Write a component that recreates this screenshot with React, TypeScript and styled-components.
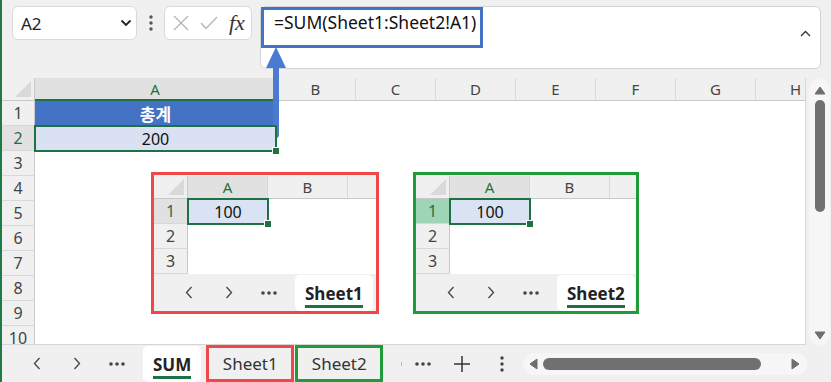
import * as React from 'react';
import styled, { createGlobalStyle } from 'styled-components';

const GREEN = '#1e7145';
const RED_FRAME = '#f04848';
const GREEN_FRAME = '#1f9b37';
const BLUE = '#4472c4';

const GlobalStyle = createGlobalStyle`
  html, body { margin: 0; padding: 0; background: #f0f0f0; }
  body { font-family: "Noto Sans", "Noto Sans CJK KR", sans-serif; color: #222; }
  * { box-sizing: border-box; }
`;

const Window = styled.div`
  position: relative;
  width: 831px;
  height: 382px;
  overflow: hidden;
  display: flex;
  flex-direction: column;
  background: #f0f0f0;
  border-left: 2px solid #1f7a48;
`;

/* ---------- formula toolbar ---------- */

const TopBar = styled.div`
  height: 78px;
  flex: none;
  display: flex;
  align-items: flex-start;
  padding: 6px 10px 0 10px;
`;

const NameBox = styled.div`
  width: 125px;
  height: 34px;
  background: #fff;
  border: 1px solid #d9d9d9;
  border-radius: 6px;
  display: flex;
  align-items: center;
  justify-content: space-between;
  padding: 0 4px 0 8px;
  font-size: 17px;
  color: #222;
`;

const Grip = styled.div`
  width: 27px;
  height: 34px;
  display: flex;
  align-items: center;
  justify-content: center;
`;

const FxBox = styled.div`
  width: 88px;
  height: 34px;
  background: #fff;
  border: 1px solid #d9d9d9;
  border-radius: 6px;
  display: flex;
  align-items: center;
  padding-left: 8px;
  gap: 11px;
`;

const FxLabel = styled.span`
  font-family: "Liberation Serif", "DejaVu Serif", serif;
  font-style: italic;
  font-size: 22px;
  color: #333;
  line-height: 1;
`;

const FormulaBar = styled.div`
  margin-left: 8px;
  width: 561px;
  height: 63px;
  background: #fff;
  border: 1px solid #d4d4d4;
  border-radius: 6px;
  display: flex;
  align-items: flex-start;
`;

const FormulaText = styled.div`
  width: 222px;
  height: 41px;
  border: 3px solid ${BLUE};
  padding-left: 10px;
  display: flex;
  align-items: center;
  font-size: 17.5px;
  color: #111;
  padding-bottom: 11px;
`;

const Collapse = styled.div`
  margin-left: auto;
  padding: 13px 9px 0 0;
`;

/* ---------- sheet grid ---------- */

const Middle = styled.div`
  height: 267px;
  flex: none;
  display: flex;
`;

const Sheet = styled.div`
  width: 804px;
  display: flex;
  flex-direction: column;
  overflow: hidden;
  background: #fff;
  border-right: 1px solid #d6d6d6;
  border-bottom: 1px solid #d6d6d6;
`;

const HeaderRow = styled.div`
  height: 23px;
  flex: none;
  display: flex;
  background: #f0f0f0;
`;

const Corner = styled.div<{ $width: number }>`
  width: ${p => p.$width}px;
  flex: none;
  display: flex;
  align-items: flex-end;
  justify-content: flex-end;
  padding: 0 3px 3px 0;
  border-right: 1px solid #c8c8c8;
  border-bottom: 1px solid #c8c8c8;
`;

const ColHeader = styled.div<{ $width: number; $active?: boolean; $underline?: boolean }>`
  width: ${p => p.$width}px;
  flex: none;
  display: flex;
  align-items: center;
  justify-content: center;
  font-size: 15px;
  color: ${p => (p.$active ? GREEN : '#444')};
  background: ${p => (p.$active ? '#e1e1e1' : 'transparent')};
  border-right: 1px solid #d8d8d8;
  border-bottom: ${p => (p.$underline ? `2px solid ${GREEN}` : '1px solid #c8c8c8')};
`;

const GridRow = styled.div`
  height: 25px;
  flex: none;
  display: flex;
`;

const RowHeader = styled.div<{ $width: number; $active?: boolean; $fill?: string }>`
  width: ${p => p.$width}px;
  flex: none;
  display: flex;
  align-items: center;
  justify-content: center;
  font-size: 16px;
  color: ${p => (p.$active ? GREEN : '#444')};
  background: ${p => p.$fill || (p.$active ? '#e1e1e1' : '#f0f0f0')};
  border-right: 1px solid #c8c8c8;
  border-bottom: 1px solid #d8d8d8;
`;

const Cell = styled.div<{ $width: number; $fill?: string; $selected?: boolean; $bold?: boolean }>`
  position: relative;
  width: ${p => p.$width}px;
  flex: none;
  display: flex;
  align-items: center;
  justify-content: center;
  font-size: 16px;
  font-weight: ${p => (p.$bold ? 700 : 400)};
  color: ${p => (p.$bold ? '#fff' : '#111')};
  background: ${p => p.$fill || '#fff'};
  ${p =>
    p.$selected &&
    `
    z-index: 1;
    outline: 2px solid ${GREEN};
    outline-offset: -1px;
    &::after {
      content: '';
      position: absolute;
      right: -4px;
      bottom: -4px;
      width: 6px;
      height: 6px;
      background: ${GREEN};
      border: 1px solid #fff;
    }
  `}
`;

const KoreanText = styled.span`
  font-family: "Noto Sans CJK KR", "Noto Sans", sans-serif;
  font-size: 17px;
`;

/* ---------- scroll bars ---------- */

const VScroll = styled.div`
  width: 21px;
  margin-left: 3px;
  margin-top: 1px;
  height: 266px;
  border-radius: 10px;
  background: #f6f6f6;
  display: flex;
  flex-direction: column;
  align-items: center;
  padding: 7px 0 5px;
`;

const VThumb = styled.div`
  width: 10px;
  height: 112px;
  margin-top: 5px;
  border-radius: 5px;
  background: #707070;
`;

const HScroll = styled.div`
  width: 284px;
  height: 22px;
  align-self: center;
  border-radius: 11px;
  background: #f6f6f6;
  display: flex;
  align-items: center;
  padding: 0 7px 0 6px;
`;

const HThumb = styled.div`
  width: 218px;
  height: 12px;
  margin-left: 5px;
  border-radius: 6px;
  background: #707070;
`;

const Spacer = styled.div`
  flex: 1;
`;

/* ---------- sheet tabs ---------- */

const TabStrip = styled.div`
  height: 37px;
  flex: none;
  display: flex;
  align-items: stretch;
  padding-left: 15px;
  background: #f0f0f0;
`;

const NavButton = styled.div<{ $width?: number }>`
  width: ${p => p.$width || 40}px;
  flex: none;
  display: flex;
  align-items: center;
  justify-content: center;
`;

const SheetTab = styled.div`
  margin: 1px 0 0 6px;
  padding: 0 10px;
  background: #fff;
  border-radius: 5px;
  display: flex;
  align-items: center;
  justify-content: center;
  font-size: 17px;
  font-weight: 700;
  color: #222;
`;

const TabLabel = styled.span`
  padding-top: 3px;
  border-bottom: 3px solid ${GREEN};
  line-height: 23px;
`;

const MarkedTab = styled.div<{ $color: string; $gap?: number }>`
  width: 88px;
  flex: none;
  margin-left: ${p => p.$gap ?? 1}px;
  border: 3px solid ${p => p.$color};
  display: flex;
  align-items: center;
  justify-content: center;
  font-size: 17px;
  color: #333;
`;

const Tick = styled.div`
  width: 1px;
  height: 4px;
  margin: 0 0 0 18px;
  align-self: center;
  background: #b8b8b8;
`;

/* ---------- floating pictures ---------- */

const MiniFrame = styled.div<{ $color: string; $left: number; $width: number }>`
  position: absolute;
  left: ${p => p.$left}px;
  top: 172px;
  width: ${p => p.$width}px;
  height: 142px;
  border: 3px solid ${p => p.$color};
  background: #f0f0f0;
  padding-top: 1px;
  display: flex;
  flex-direction: column;
  overflow: hidden;
`;

const MiniGrid = styled.div`
  background: #fff;
  display: flex;
  flex-direction: column;
`;

const Arrow = styled.svg`
  position: absolute;
  left: 263px;
  top: 47px;
`;

/* ---------- icons ---------- */

const ChevronLeft = () => (
  <svg width="8" height="13" viewBox="0 0 8 13">
    <path d="M6.5 1 L1.5 6.5 L6.5 12" fill="none" stroke="#444" strokeWidth="1.3" />
  </svg>
);

const ChevronRight = () => (
  <svg width="8" height="13" viewBox="0 0 8 13">
    <path d="M1.5 1 L6.5 6.5 L1.5 12" fill="none" stroke="#444" strokeWidth="1.3" />
  </svg>
);

const Ellipsis = () => (
  <svg width="16" height="4" viewBox="0 0 16 4">
    <circle cx="2" cy="2" r="1.8" fill="#444" />
    <circle cx="8" cy="2" r="1.8" fill="#444" />
    <circle cx="14" cy="2" r="1.8" fill="#444" />
  </svg>
);

const VDots = ({ color = '#444' }: { color?: string }) => (
  <svg width="4" height="16" viewBox="0 0 4 16">
    <circle cx="2" cy="2" r="1.7" fill={color} />
    <circle cx="2" cy="8" r="1.7" fill={color} />
    <circle cx="2" cy="14" r="1.7" fill={color} />
  </svg>
);

const Triangle = ({ dir }: { dir: 'up' | 'down' | 'left' | 'right' }) => {
  const pts = {
    up: '0,8 5,1 10,8',
    down: '0,1 10,1 5,8',
    left: '8,0 8,10 1,5',
    right: '1,0 1,10 8,5',
  }[dir];
  const vertical = dir === 'up' || dir === 'down';
  return (
    <svg width={vertical ? 10 : 9} height={vertical ? 9 : 10} viewBox={vertical ? '0 0 10 9' : '0 0 9 10'}>
      <polygon points={pts} fill="#6e6e6e" strokeLinejoin="round" stroke="#6e6e6e" strokeWidth="1" />
    </svg>
  );
};

const CornerMark = () => (
  <svg width="16" height="16" viewBox="0 0 16 16">
    <polygon points="16,0 16,16 0,16" fill="#d9d9d9" />
  </svg>
);

/* ---------- data ---------- */

const mainCols = [
  { key: 'A', width: 241 },
  { key: 'B', width: 80 },
  { key: 'C', width: 80 },
  { key: 'D', width: 80 },
  { key: 'E', width: 80 },
  { key: 'F', width: 80 },
  { key: 'G', width: 80 },
  { key: 'H', width: 80 },
];

const rows = [1, 2, 3, 4, 5, 6, 7, 8, 9, 10];

type TabsProps = { children: React.ReactNode };

const NavGroup: React.FC<TabsProps> = ({ children }) => (
  <TabStrip>
    <NavButton><ChevronLeft /></NavButton>
    <NavButton><ChevronRight /></NavButton>
    <NavButton><Ellipsis /></NavButton>
    {children}
  </TabStrip>
);

type MiniProps = {
  color: string;
  left: number;
  width: number;
  name: string;
  rowFill?: string;
};

const MiniSheet: React.FC<MiniProps> = ({ color, left, width, name, rowFill }) => (
  <MiniFrame $color={color} $left={left} $width={width}>
    <HeaderRow>
      <Corner $width={34}><CornerMark /></Corner>
      <ColHeader $width={80} $active>A</ColHeader>
      <ColHeader $width={80}>B</ColHeader>
      <ColHeader $width={40} />
    </HeaderRow>
    <MiniGrid>
      {[1, 2, 3].map(r => (
        <GridRow key={r}>
          <RowHeader $width={34} $active={r === 1} $fill={r === 1 ? rowFill : undefined}>{r}</RowHeader>
          {r === 1 ? (
            <Cell $width={80} $fill="#dae3f3" $selected>100</Cell>
          ) : (
            <Cell $width={80} />
          )}
          <Cell $width={120} />
        </GridRow>
      ))}
    </MiniGrid>
    <NavGroup>
      <SheetTab><TabLabel>{name}</TabLabel></SheetTab>
    </NavGroup>
  </MiniFrame>
);

const App: React.FC = () => (
  <Window>
    <GlobalStyle />
    <TopBar>
      <NameBox>
        <span>A2</span>
        <svg width="12" height="8" viewBox="0 0 12 8">
          <path d="M1.5 1.5 L6 6 L10.5 1.5" fill="none" stroke="#222" strokeWidth="1.8" />
        </svg>
      </NameBox>
      <Grip><VDots color="#555" /></Grip>
      <FxBox>
        <svg width="16" height="16" viewBox="0 0 16 16">
          <path d="M1 1 L15 15 M15 1 L1 15" stroke="#b4b4b4" strokeWidth="1.3" />
        </svg>
        <svg width="18" height="14" viewBox="0 0 18 14">
          <path d="M1 7 L6 12.5 L17 1" fill="none" stroke="#b4b4b4" strokeWidth="1.3" />
        </svg>
        <FxLabel>fx</FxLabel>
      </FxBox>
      <FormulaBar>
        <FormulaText>=SUM(Sheet1:Sheet2!A1)</FormulaText>
        <Collapse>
          <svg width="11" height="7" viewBox="0 0 11 7">
            <path d="M1 6 L5.5 1.5 L10 6" fill="none" stroke="#333" strokeWidth="1.3" />
          </svg>
        </Collapse>
      </FormulaBar>
    </TopBar>

    <Middle>
      <Sheet>
        <HeaderRow>
          <Corner $width={33}><CornerMark /></Corner>
          {mainCols.map(c => (
            <ColHeader key={c.key} $width={c.width} $active={c.key === 'A'} $underline={c.key === 'A'}>
              {c.key}
            </ColHeader>
          ))}
        </HeaderRow>
        {rows.map(r => (
          <GridRow key={r}>
            <RowHeader $width={33} $active={r === 2}>{r}</RowHeader>
            {r === 1 && (
              <Cell $width={241} $fill={BLUE} $bold><KoreanText>총계</KoreanText></Cell>
            )}
            {r === 2 && (
              <Cell $width={241} $fill="#d9e1f2" $selected>200</Cell>
            )}
            {r > 2 && <Cell $width={241} />}
          </GridRow>
        ))}
      </Sheet>
      <VScroll>
        <Triangle dir="up" />
        <VThumb />
        <Spacer />
        <Triangle dir="down" />
      </VScroll>
    </Middle>

    <NavGroup>
      <SheetTab><TabLabel>SUM</TabLabel></SheetTab>
      <MarkedTab $color={RED_FRAME} $gap={5}>Sheet1</MarkedTab>
      <MarkedTab $color={GREEN_FRAME}>Sheet2</MarkedTab>
      <Tick />
      <NavButton $width={42}><Ellipsis /></NavButton>
      <NavButton $width={36}>
        <svg width="18" height="18" viewBox="0 0 18 18">
          <path d="M9 1 V17 M1 9 H17" stroke="#333" strokeWidth="1.5" />
        </svg>
      </NavButton>
      <NavButton $width={43}><VDots /></NavButton>
      <HScroll>
        <Triangle dir="left" />
        <HThumb />
        <Spacer />
        <Triangle dir="right" />
      </HScroll>
    </NavGroup>

    <MiniSheet color={RED_FRAME} left={149} width={228} name="Sheet1" />
    <MiniSheet color={GREEN_FRAME} left={411} width={226} name="Sheet2" rowFill="#9fd5b7" />

    <Arrow width="22" height="92" viewBox="0 0 22 92">
      <polygon points="11,0 21,21 1,21" fill="#4a7bd0" />
      <rect x="8" y="19" width="6" height="72" rx="3" fill="#4a7bd0" />
    </Arrow>
  </Window>
);

export default App;
